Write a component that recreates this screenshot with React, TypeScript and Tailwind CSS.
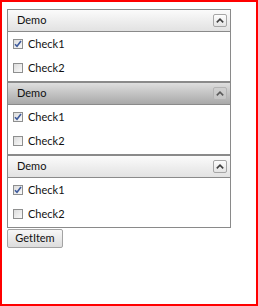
import React from "react";

function CheckBox({ checked }: { checked: boolean }) {
  return (
    <span className="flex h-[10px] w-[10px] items-center justify-center border border-[#8e8f8f] bg-gradient-to-br from-[#dcdcdc] to-[#fafafa]">
      {checked && (
        <svg width="8" height="8" viewBox="0 0 8 8">
          <path d="M1 4.2 L3 6.3 L7 1" fill="none" stroke="#3d5a9c" strokeWidth="1.6" />
        </svg>
      )}
    </span>
  );
}

function CollapseButton({ dim }: { dim?: boolean }) {
  return (
    <span
      className={
        "flex h-[13px] w-[14px] items-center justify-center rounded-[2px] border " +
        (dim ? "border-[#b4b4b4] bg-[#cfcfcf]/60" : "border-[#a6a6a6] bg-gradient-to-b from-[#fdfdfd] to-[#e4e4e4]")
      }
    >
      <svg width="8" height="5" viewBox="0 0 8 5">
        <path d="M0.8 4.4 L4 1.2 L7.2 4.4" fill="none" stroke={dim ? "#5a5a5a" : "#404040"} strokeWidth="1.6" />
      </svg>
    </span>
  );
}

function Expander({ dark }: { dark?: boolean }) {
  return (
    <div className="w-[224px] border border-[#8a8a8a]">
      <div
        className={
          "flex h-[22px] items-center justify-between border-b border-[#8a8a8a] pl-[9px] pr-[3px] " +
          (dark ? "bg-gradient-to-b from-[#dedede] to-[#a9a9a9]" : "bg-gradient-to-b from-[#fbfbfb] to-[#e2e2e2]")
        }
      >
        <span className="text-[11px] text-[#111]">Demo</span>
        <CollapseButton dim={dark} />
      </div>
      <div className="flex h-[49px] flex-col bg-white">
        <div className="flex h-[24px] items-center gap-[5px] pl-[5px]">
          <CheckBox checked />
          <span className="text-[11px] text-[#111]">Check1</span>
        </div>
        <div className="flex h-[24px] items-center gap-[5px] pl-[5px]">
          <CheckBox checked={false} />
          <span className="text-[11px] text-[#111]">Check2</span>
        </div>
      </div>
    </div>
  );
}

export default function App() {
  return (
    <div
      className="h-[306px] w-[258px] border-2 border-[#ff0000] bg-white pl-[5px] pt-[7px]"
      style={{ fontFamily: "Lato, 'Open Sans', sans-serif" }}
    >
      <Expander />
      <Expander dark />
      <Expander />
      <button className="mt-[1px] flex h-[19px] w-[56px] items-center justify-center rounded-[2px] border border-[#a3a3a3] bg-gradient-to-b from-[#f7f7f7] to-[#dddddd] text-[11px] text-[#111]">
        GetItem
      </button>
    </div>
  );
}
